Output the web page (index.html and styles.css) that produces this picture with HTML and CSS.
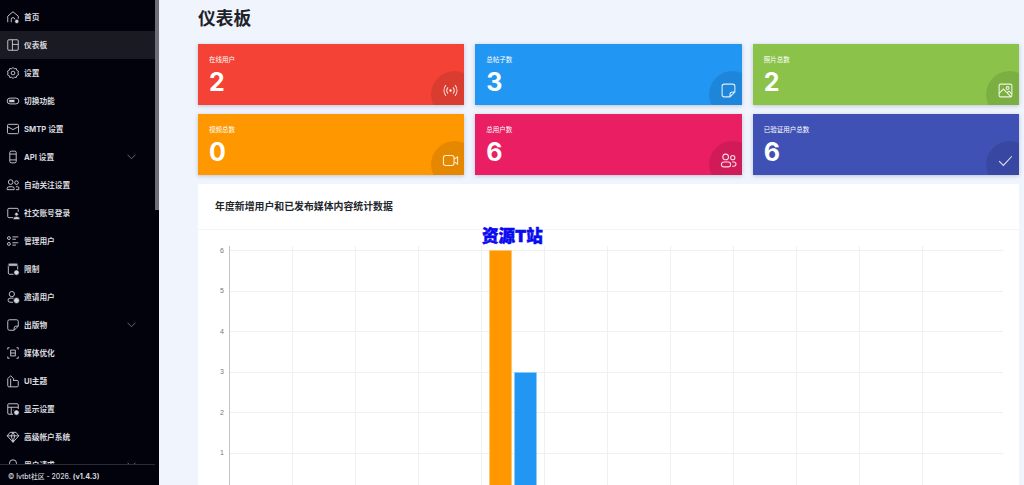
FILE: index.html
```html
<!DOCTYPE html>
<html lang="zh-CN">
<head>
<meta charset="utf-8">
<title>仪表板</title>
<link rel="stylesheet" href="styles.css">
</head>
<body>
<div class="app">
  <aside class="sidebar">
    <nav class="menu">
      <a class="item"><svg class="ico" viewBox="0 0 24 24"><path d="M3 21V10.500l9-7.500 9 7.500V15M9 21v-5a3 3 0 0 1 6 0"/><circle class="fill" cx="18.500" cy="19.500" r="3.500"/></svg><span>首页</span></a>
      <a class="item active"><svg class="ico" viewBox="0 0 24 24"><rect x="3" y="3" width="18" height="18" rx="2"/><path d="M11 3v18M11 11h10"/></svg><span>仪表板</span></a>
      <a class="item"><svg class="ico" viewBox="0 0 24 24"><path d="M12 2.500l2.300 2.400 3.300-.6.900 3.200 3 1.500-1 3 1 3-3 1.500-.9 3.200-3.300-.6-2.300 2.400-2.300-2.400-3.300.6-.9-3.200-3-1.500 1-3-1-3 3-1.500.9-3.200 3.300.6z"/><circle cx="12" cy="12" r="3.200"/></svg><span>设置</span></a>
      <a class="item"><svg class="ico" viewBox="0 0 24 24"><rect x="2" y="7" width="20" height="10" rx="5"/><rect class="fill" x="5" y="9.500" width="10" height="5" rx="1"/></svg><span>切换功能</span></a>
      <a class="item"><svg class="ico" viewBox="0 0 24 24"><rect x="2.500" y="4" width="19" height="16" rx="2"/><path d="M2.500 8l9.500 5 9.500-5"/></svg><span>SMTP 设置</span></a>
      <a class="item"><svg class="ico" viewBox="0 0 24 24"><rect x="6.500" y="2" width="11" height="20" rx="2.500"/><path d="M6.500 7h11M6.500 17h11"/></svg><span>API 设置</span><svg class="chev" viewBox="0 0 16 10"><path d="M1 1l7 7 7-7"/></svg></a>
      <a class="item"><svg class="ico" viewBox="0 0 24 24"><circle cx="8" cy="7" r="4"/><circle cx="18" cy="8" r="3"/><path d="M2 20v-2a3 3 0 0 1 3-3h6a3 3 0 0 1 3 3v2H2zM17 15h3a2 2 0 0 1 2 2v3h-5"/></svg><span>自动关注设置</span></a>
      <a class="item"><svg class="ico" viewBox="0 0 24 24"><path d="M12 20H5a2 2 0 0 1-2-2V6a2 2 0 0 1 2-2h14a2 2 0 0 1 2 2v4"/><circle class="fill" cx="18" cy="14" r="3"/><path class="fill" d="M12 23a6 5 0 0 1 12 0z"/></svg><span>社交账号登录</span></a>
      <a class="item"><svg class="ico" viewBox="0 0 24 24"><circle cx="5" cy="7" r="2.500"/><circle cx="5" cy="17" r="2.500"/><path d="M11 5h10M11 9h6M11 15h10M11 19h6"/></svg><span>管理用户</span></a>
      <a class="item"><svg class="ico" viewBox="0 0 24 24"><path d="M13 21H6a2 2 0 0 1-2-2V5a2 2 0 0 1 2-2h12a2 2 0 0 1 2 2v8"/><path class="fill" d="M4 3h16v4H4z"/><circle class="fill" cx="18" cy="18" r="4.500"/></svg><span>限制</span></a>
      <a class="item"><svg class="ico" viewBox="0 0 24 24"><circle cx="10" cy="7" r="4.500"/><path d="M12 21H7a3.500 3.500 0 0 1 0-7h6"/><circle class="fill" cx="18" cy="18" r="5"/></svg><span>邀请用户</span></a>
      <a class="item"><svg class="ico" viewBox="0 0 24 24"><path d="M6 3h12a3 3 0 0 1 3 3v8l-7 7H6a3 3 0 0 1-3-3V6a3 3 0 0 1 3-3zM14 21v-4a3 3 0 0 1 3-3h4"/></svg><span>出版物</span><svg class="chev" viewBox="0 0 16 10"><path d="M1 1l7 7 7-7"/></svg></a>
      <a class="item"><svg class="ico" viewBox="0 0 24 24"><path d="M3 3h3M18 3h3M3 21h3M18 21h3M3 3v3M21 3v3M3 18v3M21 18v3M8 7h8M8 17h8M8 7v10M16 7v10M8 12h8"/></svg><span>媒体优化</span></a>
      <a class="item"><svg class="ico" viewBox="0 0 24 24"><path d="M3 20V8l5-5 5 5v4M3 20a2 2 0 0 0 2 2h3V8M13 11h6a2 2 0 0 1 2 2v7a2 2 0 0 1-2 2H8"/></svg><span>UI主题</span></a>
      <a class="item"><svg class="ico" viewBox="0 0 24 24"><path d="M12 21H5a2 2 0 0 1-2-2V5a2 2 0 0 1 2-2h14a2 2 0 0 1 2 2v7M3 9h18M9 9v12M13 14h-1"/><circle class="fill" cx="18" cy="18" r="4.500"/></svg><span>显示设置</span></a>
      <a class="item"><svg class="ico" viewBox="0 0 24 24"><path d="M7 4h10l5 6-10 11L2 10zM2 10h20M9 10l3 11 3-11M9 10l3-6 3 6"/></svg><span>高级帐户系统</span></a>
      <a class="item"><svg class="ico" viewBox="0 0 24 24"><path d="M12 3a6 6 0 0 0-6 6v9h12V9a6 6 0 0 0-6-6z"/></svg><span>用户请求</span><svg class="chev" viewBox="0 0 16 10"><path d="M1 1l7 7 7-7"/></svg></a>
    </nav>
    <footer class="foot">© lvtbt社区 - 2026. <b>(v1.4.3)</b></footer>
  </aside>
  <div class="scrollbar"><div class="thumb"></div></div>
  <main class="main">
    <h1 class="title">仪表板</h1>
    <section class="cards">
      <div class="card red"><div class="label">在线用户</div><div class="num">2</div><div class="badge"><svg viewBox="0 0 24 24"><circle class="dot" cx="12" cy="12" r="1"/><path d="M8.500 7.500a7 7 0 0 0 0 9M15.500 7.500a7 7 0 0 1 0 9M5.500 4.500a12 12 0 0 0 0 15M18.500 4.500a12 12 0 0 1 0 15"/></svg></div></div>
      <div class="card blue"><div class="label">总帖子数</div><div class="num">3</div><div class="badge"><svg viewBox="0 0 24 24"><path d="M6 3h12a3 3 0 0 1 3 3v8l-7 7H6a3 3 0 0 1-3-3V6a3 3 0 0 1 3-3zM14 21v-3a4 4 0 0 1 4-4h3"/></svg></div></div>
      <div class="card green"><div class="label">照片总数</div><div class="num">2</div><div class="badge"><svg viewBox="0 0 24 24"><rect x="3" y="3" width="18" height="18" rx="2"/><circle cx="15" cy="8.500" r="2"/><path d="M3 16l6-6 11 11M14 15l3-2 4 4"/></svg></div></div>
      <div class="card orange"><div class="label">视频总数</div><div class="num">0</div><div class="badge"><svg viewBox="0 0 24 24"><rect x="2" y="5" width="15" height="14" rx="3"/><path d="M17 10l5-3v10l-5-3"/></svg></div></div>
      <div class="card pink"><div class="label">总用户数</div><div class="num">6</div><div class="badge"><svg viewBox="0 0 24 24"><circle cx="8" cy="7" r="4"/><circle cx="18" cy="8" r="3"/><rect x="2" y="14" width="13" height="7" rx="3.500"/><path d="M17 14h2.500a2.500 2.500 0 0 1 0 6H17"/></svg></div></div>
      <div class="card indigo"><div class="label">已验证用户总数</div><div class="num">6</div><div class="badge"><svg viewBox="0 0 24 24"><path d="M3 13l6 6L21 6"/></svg></div></div>
    </section>
    <section class="panel">
      <h2 class="panel-head">年度新增用户和已发布媒体内容统计数据</h2>
      <div class="watermark">资源T站</div>
      <div class="chart">
        <svg class="chart-svg" viewBox="0 0 822 255">
          <g class="grid">
            <path d="M32 20.500H805M32 61.500H805M32 101.500H805M32 142.500H805M32 182.500H805M32 223.500H805"/>
            <path d="M94.500 16V255M157.500 16V255M220.500 16V255M283.500 16V255M346.500 16V255M409.500 16V255M472.500 16V255M535.500 16V255M598.500 16V255M661.500 16V255M724.500 16V255"/>
          </g>
          <path class="axis" d="M31.500 16V255"/>
          <g class="ticks">
            <text x="26" y="22.500">6</text><text x="26" y="63">5</text><text x="26" y="103.500">4</text><text x="26" y="144">3</text><text x="26" y="184.500">2</text><text x="26" y="225">1</text>
          </g>
          <rect class="bar-o" x="291.500" y="20.500" width="22" height="235"/>
          <rect class="bar-b" x="316.500" y="142.500" width="22" height="113"/>
        </svg>
      </div>
    </section>
  </main>
</div>
</body>
</html>
```
FILE: styles.css
```css
* { box-sizing: border-box; }
html, body { margin: 0; height: 100%; overflow: hidden; }
body { font-family: "Inter", "Noto Sans CJK SC", sans-serif; background: #f0f4fd; }
.app { display: flex; height: 485px; overflow: hidden; }
.sidebar { width: 155px; flex: none; background: #02020c; display: flex; flex-direction: column; height: 485px; overflow: hidden; }
.menu { flex: 1; min-height: 0; overflow: hidden; padding-top: 3px; }
.item { display: flex; align-items: center; height: 28px; padding: 0 0 1px 6px; gap: 4px; color: #d6d8de; font-size: 7.700px; font-weight: 700; }
.item.active { background: #1a1b22; }
.ico { width: 14px; height: 14px; flex: none; fill: none; stroke: #c9ccd3; stroke-width: 1.600; }
.ico .fill { fill: #d5d7dc; stroke: #02020c; stroke-width: 1; }
.chev { width: 9px; height: 6px; margin-left: auto; margin-right: 19px; fill: none; stroke: #8d9097; stroke-width: 1.300; }
.foot { flex: none; height: 21px; border-top: 1px solid #2b2c33; background: #02020c; color: #d6d8de; font-size: 6.900px; font-weight: 500; display: flex; align-items: center; gap: 2px; padding: 2px 0 0 8px; white-space: nowrap; }
.foot b { font-weight: 700; font-size: 7.200px; }
.scrollbar { width: 4px; flex: none; background: #02020c; }
.thumb { height: 210px; background: #6e6f76; }
.main { flex: 1; min-width: 0; padding: 0 5px 0 39px; }
.title { margin: 0; height: 44px; padding-top: 6px; font-size: 17.700px; line-height: 26px; font-weight: 700; color: #1d2329; }
.cards { display: grid; grid-template-columns: repeat(3, 1fr); grid-auto-rows: 61px; gap: 9px 11px; }
.card { position: relative; overflow: hidden; padding: 11px 11px; color: #fff; box-shadow: 0 1px 4px rgba(30, 50, 90, .25); }
.label { font-size: 6.500px; line-height: 10px; }
.num { font-size: 25px; font-weight: 700; line-height: 27px; margin-top: 4px; }
.badge { position: absolute; right: -14px; bottom: -13px; width: 47px; height: 47px; border-radius: 50%; background: rgba(0, 0, 0, .1); }
.badge svg { position: absolute; left: 11px; top: 11px; width: 17px; height: 17px; fill: none; stroke: rgba(255,255,255,.85); stroke-width: 1.500; }
.badge .dot { fill: rgba(255,255,255,.85); }
.red { background: #f44336; }
.blue { background: #2196f3; }
.green { background: #8bc34a; }
.orange { background: #ff9800; }
.pink { background: #e91e63; }
.indigo { background: #3f51b5; }
.panel { position: relative; margin-top: 9px; background: #fff; height: 320px; }
.panel-head { margin: 0; height: 46px; padding: 0 17px 2px; display: flex; align-items: center; font-size: 9.900px; font-weight: 700; color: #22262b; border-bottom: 1px solid #f3f4f7; }
.watermark { position: absolute; left: 284px; top: 42px; font-size: 16.500px; line-height: 20px; font-weight: 900; color: #0a0af0; white-space: nowrap; -webkit-text-stroke: .5px #0a0af0; }
.chart { height: 255px; }
.chart-svg { display: block; width: 822px; height: 255px; }
.grid path { fill: none; stroke: #eef0f2; stroke-width: 1; }
.axis { fill: none; stroke: #c4c4c4; stroke-width: 1; }
.ticks text { font-family: "Liberation Sans", sans-serif; font-size: 7px; fill: #777; text-anchor: end; }
.bar-o { fill: #ff9800; stroke: #ffc266; stroke-width: .5; }
.bar-b { fill: #2196f3; stroke: #8ccbf9; stroke-width: .5; }
```
